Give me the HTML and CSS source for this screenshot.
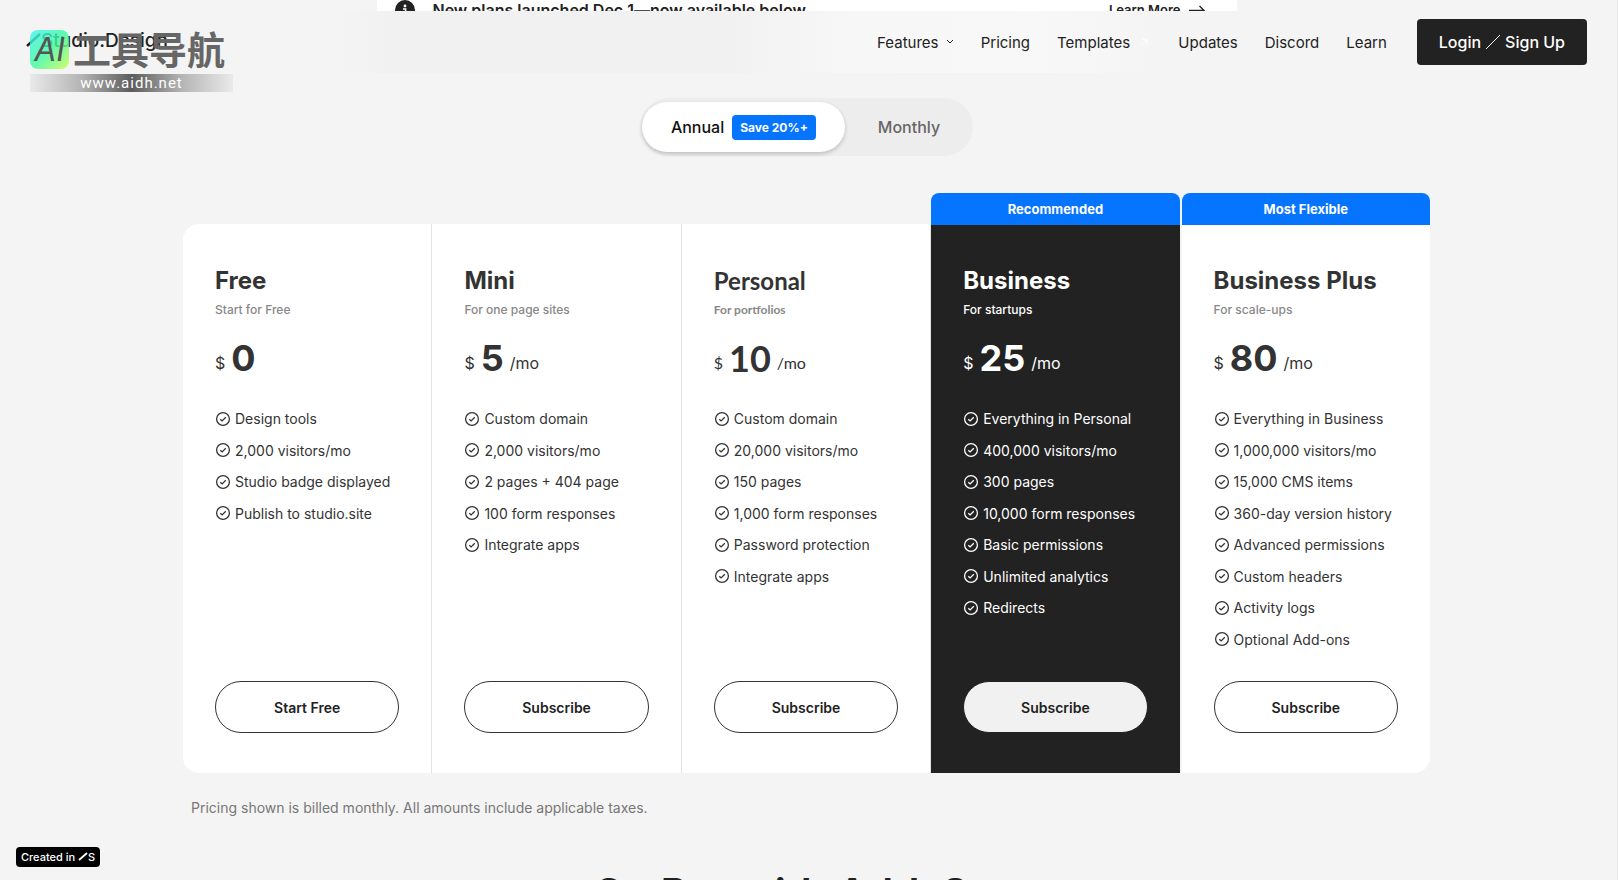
FILE: index.html
```html
<!DOCTYPE html>
<html lang="en">
<head>
  <meta charset="UTF-8" />
  <meta name="viewport" content="width=device-width, initial-scale=1.0"/>
  <title>Pricing - Studio.Design</title>
  <link rel="stylesheet" href="styles.css">
</head>
<body>

<!-- Shared icons -->
<svg class="sprite" aria-hidden="true">
  <symbol id="check" viewBox="0 0 16 16">
    <circle cx="8" cy="8" r="6.4" fill="none" stroke="currentColor" stroke-width="1.3"/>
    <path d="M5.3 8.2l1.8 1.7 3.7-3.7" fill="none" stroke="currentColor" stroke-width="1.3"/>
  </symbol>
</svg>

<div class="banner">
  <div class="banner-inner">
    <svg class="banner-icon" viewBox="0 0 20 20"><circle cx="10" cy="10" r="10" fill="#222"/><circle cx="10" cy="6" r="1.4" fill="#fff"/><path d="M8 9h2.6v5M7.5 14.2h5.4" stroke="#fff" stroke-width="1.6" fill="none"/></svg>
    <span class="banner-text">New plans launched Dec 1—now available below.</span>
    <a class="banner-link" href="#">Learn More
      <svg width="16" height="12" viewBox="0 0 16 12"><path d="M0 6.5h15L10.5 2M15 6.5L10.5 11" fill="none" stroke="#222" stroke-width="1.4"/></svg>
    </a>
  </div>
</div>

<header class="header">
  <a class="logo" href="#">
    <svg width="15" height="14" viewBox="0 0 15 14"><path d="M1 13L14 1" stroke="#222" stroke-width="2.4"/></svg>Studio.Design
  </a>
  <nav class="nav">
    <a href="#">Features <svg class="chevron" width="8" height="6" viewBox="0 0 8 6"><path d="M1 1l3 3 3-3" fill="none" stroke="#222" stroke-width="1"/></svg></a>
    <a href="#">Pricing</a>
    <a href="#">Templates <svg class="out" width="8" height="8" viewBox="0 0 8 8"><path d="M1 7l6-6M2 1h5v5" fill="none" stroke="#fff" stroke-width="1"/></svg></a>
    <a href="#">Updates</a>
    <a href="#">Discord</a>
    <a href="#">Learn</a>
  </nav>
  <button class="login">Login <svg width="16" height="16" viewBox="0 0 16 16"><path d="M1 15L15 1" stroke="#fff" stroke-width="1"/></svg> Sign Up</button>
</header>

<div class="watermark">
  <div class="watermark-top">
    <span class="watermark-ai">AI</span>
    <span class="watermark-name" lang="zh">工具导航</span>
  </div>
  <div class="watermark-url">www.aidh.net</div>
</div>

<main>
  <div class="toggle">
    <button class="toggle-btn active">Annual <span class="save">Save 20%+</span></button>
    <button class="toggle-btn">Monthly</button>
  </div>

  <section class="plans">
    <article class="plan">
      <h2>Free</h2>
      <p class="sub">Start for Free</p>
      <p class="price"><span>$</span><strong>0</strong></p>
      <ul>
        <li><svg><use href="#check"/></svg>Design tools</li>
        <li><svg><use href="#check"/></svg>2,000 visitors/mo</li>
        <li><svg><use href="#check"/></svg>Studio badge displayed</li>
        <li><svg><use href="#check"/></svg>Publish to studio.site</li>
      </ul>
      <button class="cta">Start Free</button>
    </article>

    <article class="plan">
      <h2>Mini</h2>
      <p class="sub">For one page sites</p>
      <p class="price"><span>$</span><strong>5</strong><span>/mo</span></p>
      <ul>
        <li><svg><use href="#check"/></svg>Custom domain</li>
        <li><svg><use href="#check"/></svg>2,000 visitors/mo</li>
        <li><svg><use href="#check"/></svg>2 pages + 404 page</li>
        <li><svg><use href="#check"/></svg>100 form responses</li>
        <li><svg><use href="#check"/></svg>Integrate apps</li>
      </ul>
      <button class="cta">Subscribe</button>
    </article>

    <article class="plan personal">
      <h2>Personal</h2>
      <p class="sub">For portfolios</p>
      <p class="price"><span>$</span><strong>10</strong><span>/mo</span></p>
      <ul>
        <li><svg><use href="#check"/></svg>Custom domain</li>
        <li><svg><use href="#check"/></svg>20,000 visitors/mo</li>
        <li><svg><use href="#check"/></svg>150 pages</li>
        <li><svg><use href="#check"/></svg>1,000 form responses</li>
        <li><svg><use href="#check"/></svg>Password protection</li>
        <li><svg><use href="#check"/></svg>Integrate apps</li>
      </ul>
      <button class="cta">Subscribe</button>
    </article>

    <article class="plan dark">
      <div class="ribbon">Recommended</div>
      <h2>Business</h2>
      <p class="sub">For startups</p>
      <p class="price"><span>$</span><strong>25</strong><span>/mo</span></p>
      <ul>
        <li><svg><use href="#check"/></svg>Everything in Personal</li>
        <li><svg><use href="#check"/></svg>400,000 visitors/mo</li>
        <li><svg><use href="#check"/></svg>300 pages</li>
        <li><svg><use href="#check"/></svg>10,000 form responses</li>
        <li><svg><use href="#check"/></svg>Basic permissions</li>
        <li><svg><use href="#check"/></svg>Unlimited analytics</li>
        <li><svg><use href="#check"/></svg>Redirects</li>
      </ul>
      <button class="cta">Subscribe</button>
    </article>

    <article class="plan plus">
      <div class="ribbon">Most Flexible</div>
      <h2>Business Plus</h2>
      <p class="sub">For scale-ups</p>
      <p class="price"><span>$</span><strong>80</strong><span>/mo</span></p>
      <ul>
        <li><svg><use href="#check"/></svg>Everything in Business</li>
        <li><svg><use href="#check"/></svg>1,000,000 visitors/mo</li>
        <li><svg><use href="#check"/></svg>15,000 CMS items</li>
        <li><svg><use href="#check"/></svg>360-day version history</li>
        <li><svg><use href="#check"/></svg>Advanced permissions</li>
        <li><svg><use href="#check"/></svg>Custom headers</li>
        <li><svg><use href="#check"/></svg>Activity logs</li>
        <li><svg><use href="#check"/></svg>Optional Add-ons</li>
      </ul>
      <button class="cta">Subscribe</button>
    </article>
  </section>

  <p class="note">Pricing shown is billed monthly. All amounts include applicable taxes.</p>

  <h1 class="addons">Go Pro with Add-Ons</h1>
</main>

<a class="created" href="#">Created in <svg width="10" height="9" viewBox="0 0 10 9"><path d="M1 8L9 1" stroke="#fff" stroke-width="1.8"/></svg>S</a>

</body>
</html>
```
FILE: styles.css
```css
* {
  box-sizing: border-box;
}

body {
  margin: 0;
  height: 100vh;
  padding-right: 4px;
  overflow: hidden;
  font-family: Inter, sans-serif;
  background: #f4f4f4;
  color: #222;
  border-right: 1px solid #e6e6e6;
}

a {
  color: inherit;
  text-decoration: none;
}

button {
  font-family: inherit;
  border: none;
  cursor: pointer;
}

h1, h2, p, ul {
  margin: 0;
  padding: 0;
}

.sprite {
  display: none;
}

/* Announcement, mostly scrolled under the header */
.banner {
  width: 100%;
  max-width: 860px;
  height: 11px;
  margin: 0 auto;
  padding: 0 32px 0 18px;
  background: #fff;
  overflow: hidden;
}

.banner-inner {
  display: flex;
  align-items: center;
  height: 20px;
}

.banner-icon {
  width: 20px;
  height: 20px;
  margin-right: 18px;
}

.banner-text {
  flex: 1;
  font-size: 16px;
  font-weight: 600;
}

.banner-link {
  display: flex;
  align-items: center;
  gap: 8px;
  font-size: 13px;
  font-weight: 600;
}

/* Header */
.header {
  display: flex;
  align-items: center;
  height: 62px;
  padding: 0 26px;
  background: linear-gradient(to right, #f4f4f4 20%, #f1f1f1 25%, #f1f1f1 45%, #f7f7f7 53%, #f8f8f8 64%, #f4f4f4 72%);
}

.logo {
  display: flex;
  align-items: center;
  padding-bottom: 4px;
  font-size: 19px;
  font-weight: 500;
}

.nav {
  display: flex;
  gap: 27px;
  margin-left: auto;
  font-size: 15px;
}

.chevron {
  margin: 0 0 3px 3px;
}

.out {
  margin: 0 3px 2px 6px;
}

.login {
  display: flex;
  align-items: center;
  justify-content: center;
  gap: 4px;
  height: 46px;
  margin-left: 30px;
  padding: 0 22px;
  background: #222;
  color: #fff;
  font-size: 16px;
  font-weight: 500;
  border-radius: 4px;
}

/* Directory stamp laid over the logo */
.watermark {
  position: absolute;
  top: 30px;
  left: 30px;
  width: 203px;
}

.watermark-top {
  display: flex;
  align-items: center;
  gap: 4px;
  height: 39px;
}

.watermark-ai {
  width: 39px;
  height: 39px;
  border-radius: 8px;
  background: linear-gradient(135deg, rgba(60, 245, 240, 0.8), rgba(60, 250, 160, 0.8) 50%, rgba(200, 255, 70, 0.8));
  color: #555;
  font-size: 32px;
  font-style: italic;
  line-height: 39px;
  text-align: center;
}

.watermark-name {
  padding-bottom: 4px;
  font-family: "Noto Sans CJK SC", sans-serif;
  font-size: 38px;
  font-weight: 700;
  line-height: 39px;
  color: #666;
}

.watermark-url {
  height: 18px;
  margin-top: 5px;
  background: linear-gradient(to right, #eaeaea, #b5b5b5 25%, #5c5c5c 50%, #b5b5b5 75%, #eaeaea);
  color: #fff;
  font-family: Roboto, sans-serif;
  font-size: 15px;
  letter-spacing: 1px;
  line-height: 18px;
  text-align: center;
}

/* Billing toggle */
.toggle {
  display: flex;
  width: max-content;
  height: 58px;
  margin: 25px auto 68px;
  padding: 4px 0 4px 2px;
  background: #ededed;
  border-radius: 29px;
}

.toggle-btn {
  display: flex;
  align-items: center;
  gap: 8px;
  padding: 0 33px;
  background: none;
  color: #666;
  font-size: 16px;
  font-weight: 500;
  border-radius: 25px;
}

.toggle-btn.active {
  padding: 0 29px;
  background: #fff;
  color: #111;
  box-shadow: 0 2px 4px rgba(0, 0, 0, 0.2);
}

.save {
  padding: 0 8px;
  background: #0574ff;
  color: #fff;
  font-size: 12px;
  font-weight: 700;
  line-height: 25px;
  border-radius: 4px;
}

/* Plans */
.plans {
  display: grid;
  grid-template-columns: repeat(5, 1fr);
  max-width: 1247px;
  margin: 0 auto;
}

.plan {
  position: relative;
  display: flex;
  flex-direction: column;
  padding: 41px 32px 40px;
  background: #fff;
  color: #333;
}

.plan:first-child {
  border-radius: 16px 0 0 16px;
}

.plan:nth-child(-n+3) {
  border-right: 1px solid #e3e3e3;
}

.plan.dark {
  margin-right: 1px;
  background: #222;
  color: #fff;
}

.plan.plus {
  margin-left: 1px;
  border-radius: 0 0 16px 0;
}

.ribbon {
  position: absolute;
  top: -31px;
  left: 0;
  right: 0;
  background: #0574ff;
  color: #fff;
  font-size: 13px;
  font-weight: 700;
  line-height: 32px;
  text-align: center;
  border-radius: 8px 8px 0 0;
}

.plan h2 {
  font-size: 24px;
  font-weight: 700;
  line-height: 32px;
  white-space: nowrap;
}

.sub {
  margin-top: 5px;
  color: #888;
  font-size: 12px;
  font-weight: 500;
  line-height: 16px;
}

.dark .sub {
  color: #fff;
}

.price {
  display: flex;
  align-items: flex-end;
  gap: 6px;
  height: 44px;
  margin-top: 18px;
  font-size: 16px;
  line-height: 34px;
}

.price strong {
  font-size: 36px;
  font-weight: 700;
  line-height: 44px;
}

.personal h2,
.personal .sub,
.personal .price {
  font-family: Lato, sans-serif;
}

.personal .sub {
  font-weight: 700;
}

.plan ul {
  display: grid;
  grid-template-rows: repeat(8, 1fr);
  height: 252px;
  margin: 23px 0 26px;
  list-style: none;
}

.plan li {
  display: flex;
  align-items: center;
  gap: 4px;
  font-size: 14px;
  white-space: nowrap;
}

.plan li svg {
  width: 16px;
  height: 16px;
}

.cta {
  height: 52px;
  background: #fff;
  color: #222;
  font-size: 14px;
  font-weight: 600;
  border: 1px solid #333;
  border-radius: 26px;
}

.dark .cta {
  background: #f1f1f1;
  border-color: #222;
}

.note {
  max-width: 1247px;
  margin: 23px auto 0;
  padding-left: 8px;
  color: #777;
  font-size: 14px;
  line-height: 24px;
}

.addons {
  margin-top: 46px;
  font-size: 42px;
  font-weight: 600;
  line-height: 56px;
  text-align: center;
}

/* Site badge pinned to the corner */
.created {
  position: fixed;
  left: 16px;
  bottom: 13px;
  padding: 0 5px;
  background: #000;
  color: #fff;
  font-size: 11px;
  font-weight: 500;
  line-height: 20px;
  border-radius: 4px;
}
```
